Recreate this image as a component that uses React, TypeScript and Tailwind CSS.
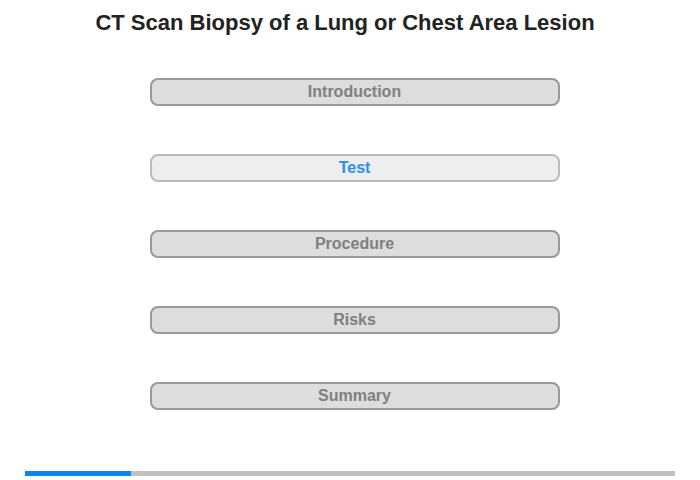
import React from 'react';

const sections = ['Introduction', 'Test', 'Procedure', 'Risks', 'Summary'];
const active = 1;

export default function App() {
  return (
    <div className="w-[700px] h-[480px] bg-white relative font-['Liberation_Sans',Arial,sans-serif]">
      <h1 className="pt-[8px] pr-[10px] text-center text-[22px] leading-[30px] font-bold text-[#222222]">
        CT Scan Biopsy of a Lung or Chest Area Lesion
      </h1>

      <div className="mt-[40px] flex flex-col items-center gap-[48px] pl-[9px]">
        {sections.map((name, i) => (
          <button
            key={name}
            className={
              i === active
                ? 'w-[410px] h-[28px] rounded-[8px] border-2 border-[#bbbbbb] bg-[#eeeeee] text-[16px] font-bold text-[#2b8ef0] leading-none'
                : 'w-[410px] h-[28px] rounded-[8px] border-2 border-[#999999] bg-[#dddddd] text-[16px] font-bold text-[#808080] leading-none'
            }
          >
            {name}
          </button>
        ))}
      </div>

      {/* progress */}
      <div className="absolute left-[25px] top-[471px] w-[650px] h-[5px] bg-[#c0c0c0]">
        <div className="w-[106px] h-full bg-[#0a84f0]"></div>
      </div>
    </div>
  );
}
